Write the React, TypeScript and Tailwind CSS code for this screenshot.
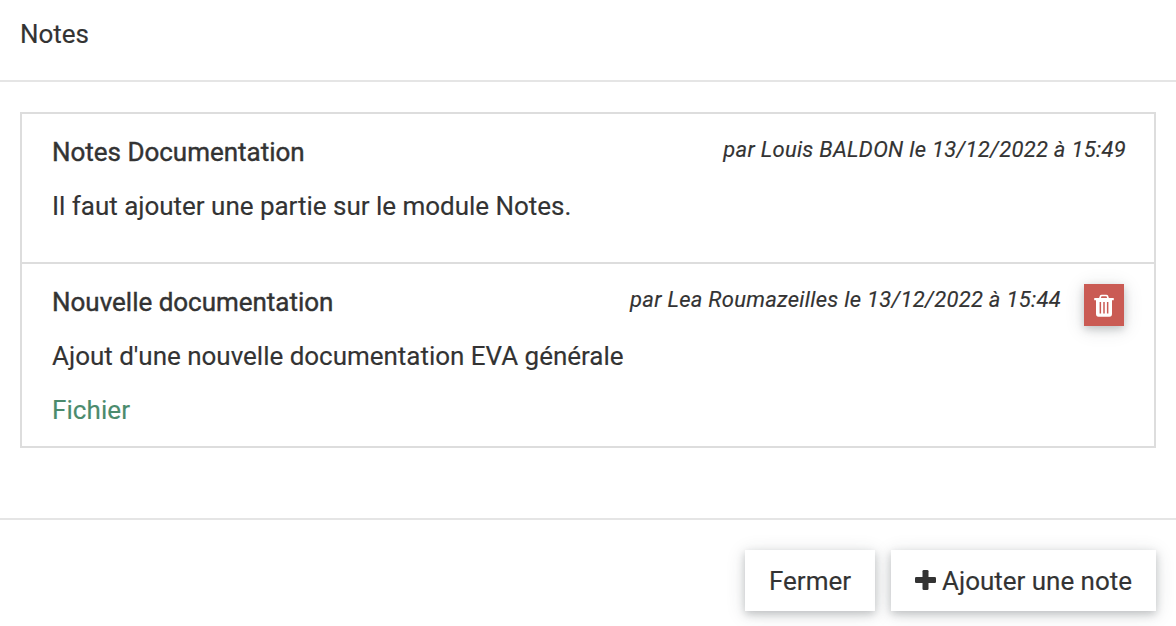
function TrashIcon() {
  return (
    <svg viewBox="0 0 20 24" className="h-6 w-5">
      <path d="M5.900 5.200 6.600 3.200Q6.900 2.500 7.700 2.500h4.600q.8 0 1.100.7l.7 2" fill="none" stroke="#fff" strokeWidth="1.700" />
      <rect x=".2" y="5" width="19.600" height="2.200" rx=".5" fill="#fff" />
      <path
        fill="#fff"
        fillRule="evenodd"
        d="M2 7h16v13.800q0 2.900-2.500 2.900h-11Q2 23.700 2 20.800ZM5.600 9.100v11.300h1.500V9.100ZM9.250 9.100v11.300h1.500V9.100ZM12.900 9.100v11.300h1.500V9.100Z"
      />
    </svg>
  );
}

function PlusIcon() {
  return (
    <svg viewBox="0 0 21 20" className="mb-0.5 h-5 w-[21px] fill-[#333333]">
      <rect x="0" y="7" width="21" height="6" rx="1.300" />
      <rect x="7.500" y="0" width="6" height="20" rx="1.300" />
    </svg>
  );
}

export default function App() {
  return (
    <main className="flex h-[626px] w-[1176px] flex-col bg-white font-[Roboto,sans-serif] text-[26px] leading-[34px] tracking-[-0.02px] text-[#333333] [-webkit-text-stroke:0.15px_currentColor]">
      <header className="h-[82px] border-b-2 border-[#e5e5e5] px-5 pt-[17px]">
        <h1>Notes</h1>
      </header>
      <section className="h-[436px] px-5 pt-[30px]">
        <div className="border-2 border-[#dddddd]">
          <article className="h-[150px] border-b-2 border-[#dddddd] px-[30px] pt-[21px]">
            <div className="flex justify-between">
              <h2 className="[-webkit-text-stroke:0.4px_currentColor]">Notes Documentation</h2>
              <p className="-mt-[2px] -mr-[2px] text-[22px] tracking-[0.27px] italic">par Louis BALDON le 13/12/2022 à 15:49</p>
            </div>
            <p className="mt-5">Il faut ajouter une partie sur le module Notes.</p>
          </article>
          <article className="h-[182px] px-[30px] pt-[21px]">
            <div className="flex h-[34px] items-start">
              <h2 className="flex-1 [-webkit-text-stroke:0.4px_currentColor]">Nouvelle documentation</h2>
              <p className="-mt-[2px] mr-[23px] text-[22px] tracking-[0.27px] italic">par Lea Roumazeilles le 13/12/2022 à 15:44</p>
              <button aria-label="Supprimer" className="-mt-px flex h-[42px] w-10 items-center justify-center bg-[#ca5b54] shadow-[0_3px_8px_rgba(50,60,65,0.25),0_3px_20px_rgba(50,60,65,0.14)]">
                <TrashIcon />
              </button>
            </div>
            <p className="mt-5">Ajout d'une nouvelle documentation EVA générale</p>
            <a href="#" className="mt-5 block tracking-[0.08px] text-[#4b8b6d]">Fichier</a>
          </article>
        </div>
      </section>
      <footer className="flex h-[108px] justify-end gap-4 border-t-2 border-[#e5e5e5] px-5 pt-[30px]">
        <button className="h-[61px] w-[130px] bg-white shadow-[0_3px_8px_rgba(50,60,65,0.25),0_3px_20px_rgba(50,60,65,0.14)]">Fermer</button>
        <button className="flex h-[61px] w-[265px] items-center justify-center gap-1.5 bg-white shadow-[0_3px_8px_rgba(50,60,65,0.25),0_3px_20px_rgba(50,60,65,0.14)]">
          <PlusIcon />
          Ajouter une note
        </button>
      </footer>
    </main>
  );
}
